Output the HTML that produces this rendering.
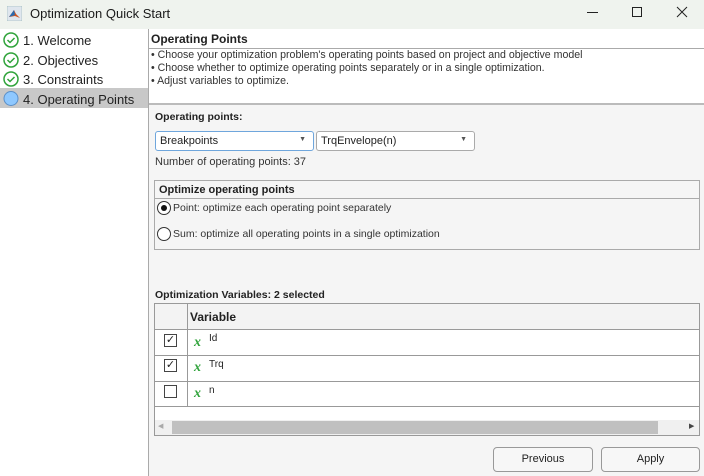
<!DOCTYPE html>
<html><head><style>
*{box-sizing:border-box;margin:0;padding:0}
body{width:704px;height:476px;position:relative;overflow:hidden;background:#f5f5f5;font-family:"Liberation Sans",Arial,sans-serif;font-size:11px;color:#222}
.a{position:absolute}
</style></head><body>
<div class="a" style="left:0;top:0;width:704px;height:29px;background:#eff3ee"></div>
<svg class="a" style="left:7px;top:6px" width="15" height="15"><rect x="0" y="0" width="15" height="15" fill="#dfe6ee" stroke="#8aa" stroke-width="0.5"/><path d="M2 11 L7 4 L9 8 L13 12 L8 10 Z" fill="#d0531e"/><path d="M2 11 L7 4 L8 9Z" fill="#2a6bb0"/></svg>
<div class="a" style="left:30px;top:6px;font-size:13px;color:#1a1a1a">Optimization Quick Start</div>
<div class="a" style="left:587px;top:12px;width:11px;height:1px;background:#222"></div>
<div class="a" style="left:632px;top:7px;width:10px;height:10px;border:1px solid #222"></div>
<svg class="a" style="left:676px;top:6px" width="12" height="12"><path d="M1 1L11 11M11 1L1 11" stroke="#222" stroke-width="1"/></svg>
<div class="a" style="left:0;top:29px;width:149px;height:447px;background:#fff;border-right:1px solid #aaa"></div>
<div class="a" style="left:0;top:88px;width:148px;height:20px;background:#c8c8c8"></div>
<svg class="a" style="left:3px;top:32px" width="18" height="76">
<g fill="none" stroke="#2fa33a" stroke-width="1.5"><circle cx="8" cy="8" r="7"/><path d="M4.5 8l2.5 2.5 4.5-4.5"/><circle cx="8" cy="28" r="7"/><path d="M4.5 28l2.5 2.5 4.5-4.5"/><circle cx="8" cy="47" r="7"/><path d="M4.5 47l2.5 2.5 4.5-4.5"/></g>
<circle cx="8" cy="66.5" r="7" fill="#8ec8ff" stroke="#5a8fc8" stroke-width="1"/></svg>
<div class="a" style="left:23px;top:31px;font-size:13px;line-height:19.5px;color:#222">1. Welcome<br>2. Objectives<br>3. Constraints<br>4. Operating Points</div>
<div class="a" style="left:149px;top:29px;width:555px;height:76px;background:#fff;border-bottom:2px solid #bbb"></div>
<div class="a" style="left:149px;top:48px;width:555px;height:1px;background:#aaa"></div>
<div class="a" style="left:151px;top:32px;font-size:12px;font-weight:bold">Operating Points</div>
<div class="a" style="left:151px;top:49px;font-size:10.6px;line-height:13px;color:#333">• Choose your optimization problem's operating points based on project and objective model<br>• Choose whether to optimize operating points separately or in a single optimization.<br>• Adjust variables to optimize.</div>
<div class="a" style="left:155px;top:111px;font-size:10.5px;font-weight:bold;color:#222">Operating points:</div>
<div class="a" style="left:155px;top:131px;width:159px;height:20px;background:#fff;border:1px solid #6fa6dc;border-radius:3px;padding:3px 4px;font-size:11px">Breakpoints<span style="position:absolute;right:7px;top:4px;font-size:7px;color:#555">▼</span></div>
<div class="a" style="left:316px;top:131px;width:159px;height:20px;background:#fff;border:1px solid #aaa;border-radius:3px;padding:3px 4px;font-size:11px">TrqEnvelope(n)<span style="position:absolute;right:7px;top:4px;font-size:7px;color:#555">▼</span></div>
<div class="a" style="left:155px;top:156px;font-size:11px;color:#333">Number of operating points: 37</div>
<div class="a" style="left:154px;top:180px;width:546px;height:70px;border:1px solid #aaa"></div>
<div class="a" style="left:154px;top:198px;width:546px;height:1px;background:#aaa"></div>
<div class="a" style="left:159px;top:184px;font-size:11px;font-weight:bold">Optimize operating points</div>
<div class="a" style="left:157px;top:201px;width:14px;height:14px;border:1px solid #333;border-radius:50%;background:#fff"><div style="margin:3px;width:6px;height:6px;border-radius:50%;background:#111"></div></div>
<div class="a" style="left:173px;top:202px;font-size:10.5px;color:#333">Point: optimize each operating point separately</div>
<div class="a" style="left:157px;top:227px;width:14px;height:14px;border:1px solid #333;border-radius:50%;background:#fff"></div>
<div class="a" style="left:173px;top:228px;font-size:10.5px;color:#333">Sum: optimize all operating points in a single optimization</div>
<div class="a" style="left:155px;top:289px;font-size:10.5px;font-weight:bold;color:#222">Optimization Variables: 2 selected</div>
<div class="a" style="left:154px;top:303px;width:546px;height:133px;border:1px solid #999;background:#fff"></div>
<div class="a" style="left:155px;top:304px;width:544px;height:26px;background:#f3f3f3;border-bottom:1px solid #999"></div>
<div class="a" style="left:187px;top:304px;width:1px;height:102px;background:#999"></div>
<div class="a" style="left:155px;top:355px;width:544px;height:1px;background:#999"></div>
<div class="a" style="left:155px;top:381px;width:544px;height:1px;background:#999"></div>
<div class="a" style="left:155px;top:406px;width:544px;height:1px;background:#999"></div>
<div class="a" style="left:190px;top:310px;font-size:12px;font-weight:bold">Variable</div>
<div class="a" style="left:164px;top:334px;width:13px;height:13px;border:1px solid #444;font-size:11px;line-height:11px;text-align:center">✓</div>
<div class="a" style="left:164px;top:359px;width:13px;height:13px;border:1px solid #444;font-size:11px;line-height:11px;text-align:center">✓</div>
<div class="a" style="left:164px;top:385px;width:13px;height:13px;border:1px solid #444"></div>
<div class="a" style="left:194px;top:335px;font-family:'Liberation Serif',serif;font-style:italic;font-weight:bold;font-size:14px;color:#2fa33a">x</div>
<div class="a" style="left:194px;top:360px;font-family:'Liberation Serif',serif;font-style:italic;font-weight:bold;font-size:14px;color:#2fa33a">x</div>
<div class="a" style="left:194px;top:386px;font-family:'Liberation Serif',serif;font-style:italic;font-weight:bold;font-size:14px;color:#2fa33a">x</div>
<div class="a" style="left:209px;top:333px;font-size:10px">Id</div>
<div class="a" style="left:209px;top:359px;font-size:10px">Trq</div>
<div class="a" style="left:209px;top:385px;font-size:10px">n</div>
<div class="a" style="left:155px;top:420px;width:544px;height:15px;background:#f0f0f0"></div>
<div class="a" style="left:172px;top:421px;width:486px;height:13px;background:#c0c0c0"></div>
<div class="a" style="left:158px;top:422px;font-size:7px;color:#aaa">◀</div>
<div class="a" style="left:689px;top:422px;font-size:7px;color:#444">▶</div>
<div class="a" style="left:493px;top:447px;width:100px;height:25px;border:1px solid #999;border-radius:4px;background:#f7f7f7;text-align:center;line-height:23px;font-size:11px">Previous</div>
<div class="a" style="left:601px;top:447px;width:99px;height:25px;border:1px solid #999;border-radius:4px;background:#f7f7f7;text-align:center;line-height:23px;font-size:11px">Apply</div>
</body></html>
